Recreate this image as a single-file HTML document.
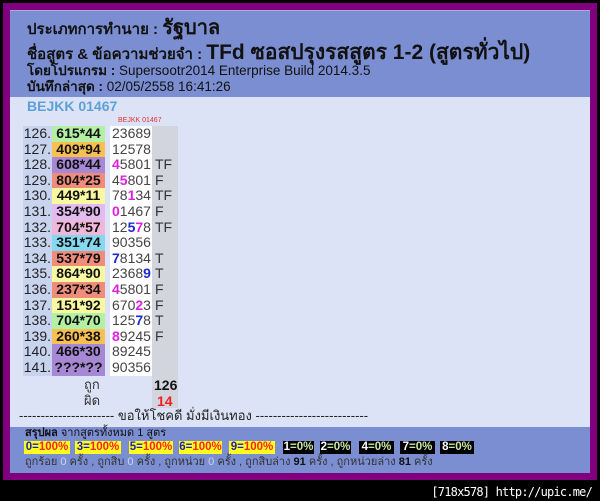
<!DOCTYPE html>
<html><head><meta charset="utf-8"><style>
*{margin:0;padding:0;box-sizing:border-box}
body{width:600px;height:501px;background:#000;position:relative;overflow:hidden;font-family:"Liberation Sans","Noto Sans CJK SC",sans-serif;}
.a{position:absolute;white-space:nowrap;line-height:1.2}
#frame{left:3px;top:3px;width:594px;height:477px;background:#800080}
#hdr{left:10px;top:10px;width:580px;height:87px;background:#7b8ed1;border-top:1px solid #b9a6de}
#body{left:10px;top:97px;width:580px;height:330px;background:#dde3f6}
#ftr{left:10px;top:427px;width:580px;height:46px;background:#7b8ed1}
.t{color:#111;font-size:14px}
.row{position:absolute;left:23px;height:15.6px;font-size:14px;line-height:15.6px}
.n{position:absolute;left:0;width:29px;text-align:right;background:#c8d4ee;height:15.6px;padding-right:1px;color:#222}
.p{position:absolute;left:29px;width:53px;text-align:center;font-weight:bold;height:15.6px;color:#111}
.d{position:absolute;left:87px;width:42px;background:#fff;color:#444;height:15.6px;padding-left:2px}
.f{position:absolute;left:129px;width:26px;background:#d3d5de;color:#333;height:15.6px;padding-left:3px}
.m{color:#e020e0;font-weight:bold}.b{color:#1c2ad0;font-weight:bold}
.bd{position:absolute;top:441px;height:13px;font-size:11.5px;line-height:13px;font-weight:bold;text-align:center}
.y{background:#ffff20;color:#2020b0}.y span{color:#ff2020}
.k{background:#000;color:#fff}.k span{color:#c8e8a0}
</style></head><body>
<div class="a" id="frame"></div>
<div class="a" id="hdr"></div>
<div class="a" id="body"></div>
<div class="a" id="ftr"></div>
<div class="a t" style="left:27px;top:16px;font-size:15px"><b>ประเภทการทำนาย : </b><b style="font-size:20px">รัฐบาล</b></div>
<div class="a t" style="left:27px;top:40px;font-size:15px"><b>ชื่อสูตร &amp; ข้อความช่วยจำ : </b><b style="font-size:21px">TFd ซอสปรุงรสสูตร 1-2 (สูตรทั่วไป)</b></div>
<div class="a t" style="left:27px;top:63px;font-size:13.5px"><b>โดยโปรแกรม :</b> Supersootr2014 Enterprise Build 2014.3.5</div>
<div class="a t" style="left:27px;top:79px;font-size:13.5px"><b>บันทึกล่าสุด :</b> 02/05/2558 16:41:26</div>
<div class="a" style="left:27px;top:98px;font-size:14px;font-weight:bold;color:#5ba0d8">BEJKK 01467</div>
<div class="a" style="left:118px;top:117px;font-size:7px;color:#e03030">BEJKK 01467</div>
<div class="row" style="top:126px"><div class="n">126.</div><div class="p" style="background:#b4f0a4">615*44</div><div class="d">23689</div><div class="f"></div></div>
<div class="row" style="top:141.6px"><div class="n">127.</div><div class="p" style="background:#f8c050">409*94</div><div class="d">12578</div><div class="f"></div></div>
<div class="row" style="top:157.2px"><div class="n">128.</div><div class="p" style="background:#a688d4">608*44</div><div class="d"><span class="m">4</span>5801</div><div class="f">TF</div></div>
<div class="row" style="top:172.8px"><div class="n">129.</div><div class="p" style="background:#f08c7c">804*25</div><div class="d">4<span class="m">5</span>801</div><div class="f">F</div></div>
<div class="row" style="top:188.4px"><div class="n">130.</div><div class="p" style="background:#f8f8a0">449*11</div><div class="d">78<span class="m">1</span>34</div><div class="f">TF</div></div>
<div class="row" style="top:204px"><div class="n">131.</div><div class="p" style="background:#e2bcf0">354*90</div><div class="d"><span class="m">0</span>1467</div><div class="f">F</div></div>
<div class="row" style="top:219.6px"><div class="n">132.</div><div class="p" style="background:#f0b8d8">704*57</div><div class="d">12<span class="b">5</span><span class="m">7</span>8</div><div class="f">TF</div></div>
<div class="row" style="top:235.2px"><div class="n">133.</div><div class="p" style="background:#84d8f0">351*74</div><div class="d">90356</div><div class="f"></div></div>
<div class="row" style="top:250.8px"><div class="n">134.</div><div class="p" style="background:#f08c7c">537*79</div><div class="d"><span class="b">7</span>8134</div><div class="f">T</div></div>
<div class="row" style="top:266.4px"><div class="n">135.</div><div class="p" style="background:#f8f8a0">864*90</div><div class="d">2368<span class="b">9</span></div><div class="f">T</div></div>
<div class="row" style="top:282px"><div class="n">136.</div><div class="p" style="background:#f08c7c">237*34</div><div class="d"><span class="m">4</span>5801</div><div class="f">F</div></div>
<div class="row" style="top:297.6px"><div class="n">137.</div><div class="p" style="background:#f8f8a0">151*92</div><div class="d">670<span class="m">2</span>3</div><div class="f">F</div></div>
<div class="row" style="top:313.2px"><div class="n">138.</div><div class="p" style="background:#b4f0a4">704*70</div><div class="d">125<span class="b">7</span>8</div><div class="f">T</div></div>
<div class="row" style="top:328.8px"><div class="n">139.</div><div class="p" style="background:#f8c050">260*38</div><div class="d"><span class="m">8</span>9245</div><div class="f">F</div></div>
<div class="row" style="top:344.4px"><div class="n">140.</div><div class="p" style="background:#a688d4">466*30</div><div class="d">89245</div><div class="f"></div></div>
<div class="row" style="top:360px"><div class="n">141.</div><div class="p" style="background:#a688d4">???*??</div><div class="d">90356</div><div class="f"></div></div>
<div class="a" style="left:152px;top:376px;width:26px;height:32px;background:#d3d5de"></div>
<div class="a" style="left:84px;top:377px;font-size:13px;color:#333">ถูก</div>
<div class="a" style="left:84px;top:393px;font-size:13px;color:#333">ผิด</div>
<div class="a" style="left:154px;top:377px;font-size:14px;font-weight:bold;color:#111">126</div>
<div class="a" style="left:157px;top:393px;font-size:14px;font-weight:bold;color:#f02020">14</div>
<div class="a" style="left:19px;top:408px;font-size:13px;color:#222">---------------------- ขอให้โชคดี มั่งมีเงินทอง --------------------------</div>
<div class="a" style="left:25px;top:427px;font-size:11px;line-height:13px;color:#111"><b>สรุปผล</b> จากสูตรทั้งหมด 1 สูตร</div>
<div class="bd y" style="left:24px;width:46px">0=<span>100%</span></div>
<div class="bd y" style="left:75px;width:46px">3=<span>100%</span></div>
<div class="bd y" style="left:129px;width:44px">5=<span>100%</span></div>
<div class="bd y" style="left:179px;width:43px">6=<span>100%</span></div>
<div class="bd y" style="left:229px;width:46px">9=<span>100%</span></div>
<div class="bd k" style="left:283px;width:31px">1<span>=0%</span></div>
<div class="bd k" style="left:320px;width:31px">2<span>=0%</span></div>
<div class="bd k" style="left:359px;width:35px">4<span>=0%</span></div>
<div class="bd k" style="left:400px;width:35px">7<span>=0%</span></div>
<div class="bd k" style="left:440px;width:34px">8<span>=0%</span></div>
<div class="a" style="left:25px;top:456px;font-size:11px;color:#333">ถูกร้อย <span style="color:#c8d4f0">0</span> ครั้ง , ถูกสิบ <span style="color:#c8d4f0">0</span> ครั้ง , ถูกหน่วย <span style="color:#c8d4f0">0</span> ครั้ง , ถูกสิบล่าง <b style="color:#111">91</b> ครั้ง , ถูกหน่วยล่าง <b style="color:#111">81</b> ครั้ง</div>
<div class="a" style="right:8px;top:485px;font-size:12px;color:#fff;font-family:'DejaVu Sans Mono',monospace;letter-spacing:-0.8px">[718x578] http://upic.me/</div>
</body></html>
